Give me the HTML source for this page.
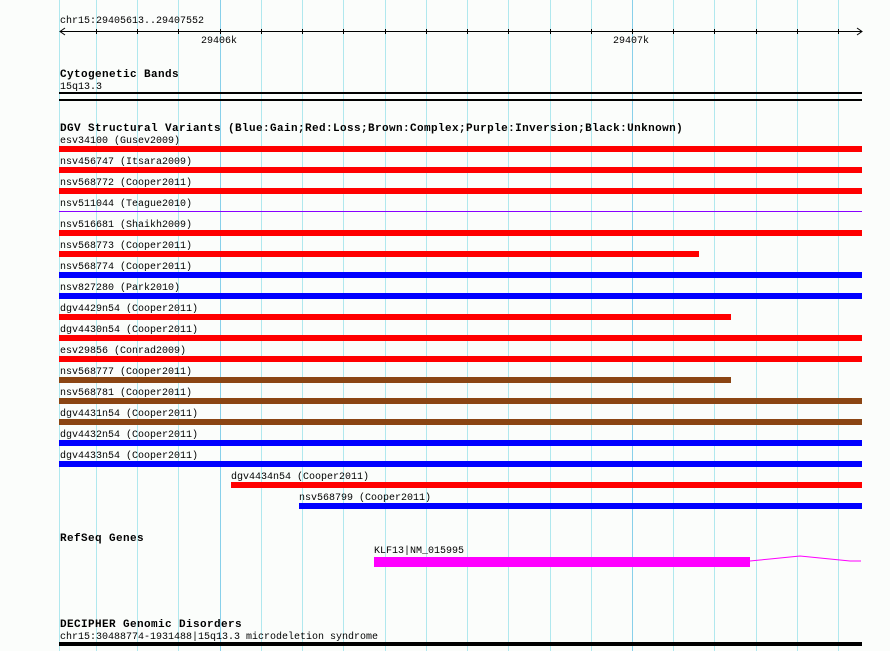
<!DOCTYPE html><html><head><style>
body{margin:0;width:890px;height:651px;background:#fbfdfb;position:relative;overflow:hidden;font-family:"Liberation Mono",monospace;font-size:10px;color:#000}
.g{position:absolute;top:0;height:651px;width:1px;background:#b0e8ee}
.d{background:#88d0ea}
.t{position:absolute;white-space:pre;line-height:11px;transform:translateY(1px)}
.h{font-weight:bold;font-size:11px;letter-spacing:0.4px;transform:translateY(2px)}
.b{position:absolute;height:6px}
</style></head><body>
<div class="g" style="left:59px"></div><div class="g" style="left:96px"></div><div class="g" style="left:137px"></div><div class="g" style="left:178px"></div><div class="g d" style="left:220px"></div><div class="g" style="left:261px"></div><div class="g" style="left:302px"></div><div class="g" style="left:343px"></div><div class="g" style="left:385px"></div><div class="g" style="left:426px"></div><div class="g" style="left:467px"></div><div class="g" style="left:508px"></div><div class="g" style="left:550px"></div><div class="g" style="left:591px"></div><div class="g d" style="left:632px"></div><div class="g" style="left:673px"></div><div class="g" style="left:714px"></div><div class="g" style="left:756px"></div><div class="g" style="left:797px"></div><div class="g" style="left:838px"></div>
<svg style="position:absolute;left:0;top:0" width="890" height="60">
<line x1="60" y1="31.5" x2="862" y2="31.5" stroke="#000"/>
<polyline points="65,28 60,31.5 65,35" fill="none" stroke="#000"/>
<polyline points="857,28 862,31.5 857,35" fill="none" stroke="#000"/>
<g stroke="#000">
<line x1="96.5" y1="29" x2="96.5" y2="34"/><line x1="137.5" y1="29" x2="137.5" y2="34"/><line x1="178.5" y1="29" x2="178.5" y2="34"/><line x1="220.5" y1="29" x2="220.5" y2="34"/><line x1="261.5" y1="29" x2="261.5" y2="34"/><line x1="302.5" y1="29" x2="302.5" y2="34"/><line x1="343.5" y1="29" x2="343.5" y2="34"/><line x1="385.5" y1="29" x2="385.5" y2="34"/><line x1="426.5" y1="29" x2="426.5" y2="34"/><line x1="467.5" y1="29" x2="467.5" y2="34"/><line x1="508.5" y1="29" x2="508.5" y2="34"/><line x1="550.5" y1="29" x2="550.5" y2="34"/><line x1="591.5" y1="29" x2="591.5" y2="34"/><line x1="632.5" y1="29" x2="632.5" y2="34"/><line x1="673.5" y1="29" x2="673.5" y2="34"/><line x1="714.5" y1="29" x2="714.5" y2="34"/><line x1="756.5" y1="29" x2="756.5" y2="34"/><line x1="797.5" y1="29" x2="797.5" y2="34"/><line x1="838.5" y1="29" x2="838.5" y2="34"/>
</g></svg>
<div class="t" style="left:60px;top:15px">chr15:29405613..29407552</div>
<div class="t" style="left:201px;top:35px">29406k</div>
<div class="t" style="left:613px;top:35px">29407k</div>
<div class="t h" style="left:60px;top:68px">Cytogenetic Bands</div>
<div class="t" style="left:60px;top:81px">15q13.3</div>
<div class="b" style="left:59px;top:92px;width:803px;height:2px;background:#000"></div>
<div class="b" style="left:59px;top:99px;width:803px;height:2px;background:#000"></div>
<div class="t h" style="left:60px;top:122px">DGV Structural Variants (Blue:Gain;Red:Loss;Brown:Complex;Purple:Inversion;Black:Unknown)</div>

<div class="t" style="left:60px;top:135px">esv34100 (Gusev2009)</div><div class="b" style="left:59px;top:146px;width:803px;background:#f00"></div>
<div class="t" style="left:60px;top:156px">nsv456747 (Itsara2009)</div><div class="b" style="left:59px;top:167px;width:803px;background:#f00"></div>
<div class="t" style="left:60px;top:177px">nsv568772 (Cooper2011)</div><div class="b" style="left:59px;top:188px;width:803px;background:#f00"></div>
<div class="t" style="left:60px;top:198px">nsv511044 (Teague2010)</div><div class="b" style="left:59px;top:211px;width:803px;height:1px;background:#80f"></div>
<div class="t" style="left:60px;top:219px">nsv516681 (Shaikh2009)</div><div class="b" style="left:59px;top:230px;width:803px;background:#f00"></div>
<div class="t" style="left:60px;top:240px">nsv568773 (Cooper2011)</div><div class="b" style="left:59px;top:251px;width:640px;background:#f00"></div>
<div class="t" style="left:60px;top:261px">nsv568774 (Cooper2011)</div><div class="b" style="left:59px;top:272px;width:803px;background:#00f"></div>
<div class="t" style="left:60px;top:282px">nsv827280 (Park2010)</div><div class="b" style="left:59px;top:293px;width:803px;background:#00f"></div>
<div class="t" style="left:60px;top:303px">dgv4429n54 (Cooper2011)</div><div class="b" style="left:59px;top:314px;width:672px;background:#f00"></div>
<div class="t" style="left:60px;top:324px">dgv4430n54 (Cooper2011)</div><div class="b" style="left:59px;top:335px;width:803px;background:#f00"></div>
<div class="t" style="left:60px;top:345px">esv29856 (Conrad2009)</div><div class="b" style="left:59px;top:356px;width:803px;background:#f00"></div>
<div class="t" style="left:60px;top:366px">nsv568777 (Cooper2011)</div><div class="b" style="left:59px;top:377px;width:672px;background:#8b4513"></div>
<div class="t" style="left:60px;top:387px">nsv568781 (Cooper2011)</div><div class="b" style="left:59px;top:398px;width:803px;background:#8b4513"></div>
<div class="t" style="left:60px;top:408px">dgv4431n54 (Cooper2011)</div><div class="b" style="left:59px;top:419px;width:803px;background:#8b4513"></div>
<div class="t" style="left:60px;top:429px">dgv4432n54 (Cooper2011)</div><div class="b" style="left:59px;top:440px;width:803px;background:#00f"></div>
<div class="t" style="left:60px;top:450px">dgv4433n54 (Cooper2011)</div><div class="b" style="left:59px;top:461px;width:803px;background:#00f"></div>
<div class="t" style="left:231px;top:471px">dgv4434n54 (Cooper2011)</div><div class="b" style="left:231px;top:482px;width:631px;background:#f00"></div>
<div class="t" style="left:299px;top:492px">nsv568799 (Cooper2011)</div><div class="b" style="left:299px;top:503px;width:563px;background:#00f"></div>

<div class="t h" style="left:60px;top:532px">RefSeq Genes</div>
<div class="t" style="left:374px;top:545px">KLF13|NM_015995</div>
<div class="b" style="left:374px;top:557px;width:376px;height:10px;background:#f0f"></div>
<svg style="position:absolute;left:745px;top:550px" width="120" height="20"><polyline points="5,11 15,10 25,9 35,8 45,7 55,6 65,7 75,8 85,9 95,10 105,11 116,11" fill="none" stroke="#f0f"/></svg>
<div class="t h" style="left:60px;top:618px">DECIPHER Genomic Disorders</div>
<div class="t" style="left:60px;top:631px">chr15:30488774-1931488|15q13.3 microdeletion syndrome</div>
<div class="b" style="left:59px;top:642px;width:803px;height:4px;background:#000"></div>
</body></html>
